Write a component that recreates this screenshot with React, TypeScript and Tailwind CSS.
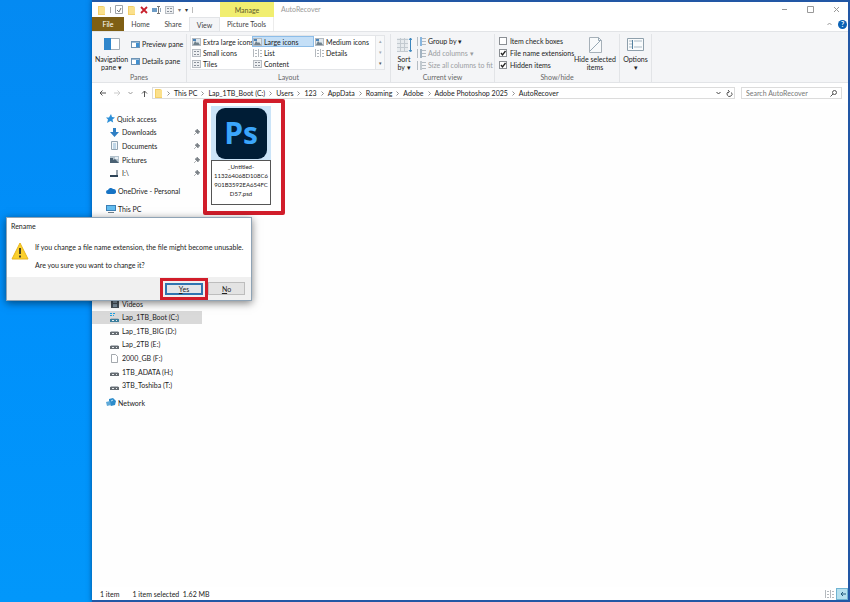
import React from "react";

const font = "font-[Lato,'Open_Sans',sans-serif]";

function FolderIcon({ className = "" }: { className?: string }) {
  return (
    <svg viewBox="0 0 9 10" className={`h-[10px] w-[9px] shrink-0 ${className}`}>
      <path d="M1 1h5l2 1v8H1z" fill="#f3cf68" />
      <path d="M2 2h6v7H2z" fill="#fbe08c" />
    </svg>
  );
}

function GridIcon({ tone = "#8a9099" }: { tone?: string }) {
  return (
    <svg viewBox="0 0 9 8" className="h-[8px] w-[9px] shrink-0">
      <rect x="0.5" y="0.5" width="8" height="7" fill="#eef0f2" stroke="#b9bec4" />
      <path d="M2 2.5h2M5 2.5h2M2 5.5h2M5 5.5h2" stroke={tone} />
    </svg>
  );
}

function ListIcon() {
  return (
    <svg viewBox="0 0 9 8" className="h-[8px] w-[9px] shrink-0">
      <path d="M0.500 0v8M5.500 0v8" stroke="#b4b9be" />
      <path d="M2 1.500h2M2 4.500h2M2 7.500h2M7 1.500h2M7 4.500h2M7 7.500h2" stroke="#b4b9be" />
    </svg>
  );
}

function PictureIcon() {
  return (
    <svg viewBox="0 0 9 8" className="h-[8px] w-[9px] shrink-0">
      <rect x="0.5" y="0.5" width="8" height="7" fill="#dfe8ee" stroke="#b4bac0" />
      <path d="M1 7l2-4 2 2 1-1 2 3z" fill="#70818c" />
      <path d="M1 1h3v2H1z" fill="#4c84b8" />
    </svg>
  );
}

function PaneIcon() {
  return (
    <svg viewBox="0 0 9 7" className="h-[7px] w-[9px] shrink-0">
      <rect x="0.5" y="0.5" width="8" height="6" fill="#fff" stroke="#6d93b5" />
      <path d="M5 1h3v5H5z" fill="#3f8fd0" />
      <path d="M1 1h7v1H1z" fill="#9dbcd6" />
    </svg>
  );
}

function ColumnsIcon({ fill }: { fill: string }) {
  return (
    <svg viewBox="0 0 9 9" className="h-[9px] w-[9px] shrink-0">
      <path d="M0.5 0v9M3 1.5h6M3 4.5h6M3 7.5h6" stroke="#b4bcc3" />
      <path d="M3 0h2v9H3z" fill={fill} />
    </svg>
  );
}

function DriveIcon({ system = false }: { system?: boolean }) {
  return (
    <svg viewBox="0 0 9 9" className="h-[9px] w-[9px] shrink-0">
      {system && <path d="M0 0h2v1H0zM3 0h2v1H3zM0 2h2v1H0zM3 2h1v1H3z" fill="#1c9fe0" />}
      <path d="M1 5h7l1 2H0z" fill="#b5babf" />
      <path d="M0 6h9v3H0z" fill={system ? "#3b7f9e" : "#666c72"} />
      <path d="M2 7.5h2M6 7.5h1" stroke="#e9ecef" />
    </svg>
  );
}

function Pin() {
  return (
    <svg viewBox="0 0 6 6" className="mr-[2px] ml-auto h-[6px] w-[6px] shrink-0">
      <path d="M3 0l3 3-1 0-1 2-3-3 2-1zM2.500 3.500L0 6" fill="#7b8187" stroke="#7b8187" strokeWidth="0.600" />
    </svg>
  );
}

const icons: Record<string, React.ReactNode> = {
  star: (
    <svg viewBox="0 0 9 9" className="h-[9px] w-[9px] shrink-0">
      <path d="M5 0l1 3 3 .5-2.500 2 .7 3L4.500 7 1 9l1-3.500L0 3.500h3z" fill="#2c8fd8" />
    </svg>
  ),
  down: (
    <svg viewBox="0 0 9 9" className="h-[9px] w-[9px] shrink-0">
      <path d="M3 0h3v4h3L4.500 9 0 4h3z" fill="#2f7fc4" />
    </svg>
  ),
  doc: (
    <svg viewBox="0 0 9 9" className="h-[9px] w-[9px] shrink-0">
      <path d="M1.500.5h6v8h-6z" fill="#f4f7f9" stroke="#93a4b1" />
      <path d="M3 3h3M3 5h3M3 7h3" stroke="#5e9ac4" strokeWidth="0.700" />
    </svg>
  ),
  picture: (
    <svg viewBox="0 0 9 9" className="h-[9px] w-[9px] shrink-0">
      <path d="M0 1h9v7H0z" fill="#b4c3cd" />
      <path d="M0 8V3h3v2l2-1 4 4z" fill="#4a6173" />
      <path d="M5 2h3v2H5z" fill="#e6eef4" />
    </svg>
  ),
  usb: (
    <svg viewBox="0 0 9 9" className="h-[9px] w-[9px] shrink-0">
      <path d="M6 1h2v7H6z" fill="#9aa5ae" />
      <path d="M0 6h8v2H0z" fill="#2f4558" />
    </svg>
  ),
  cloud: (
    <svg viewBox="0 0 10 8" className="h-[8px] w-[10px] shrink-0">
      <path d="M2 7a2 2 0 010-4 3 3 0 015-1 2.500 2.500 0 011 5z" fill="#1673c4" />
    </svg>
  ),
  pc: (
    <svg viewBox="0 0 10 9" className="h-[9px] w-[10px] shrink-0">
      <path d="M0 1h10v6H0z" fill="#3a7fb5" />
      <path d="M1 2h8v4H1z" fill="#63bdf0" />
      <path d="M2 8h6v1H2z" fill="#71808b" />
    </svg>
  ),
  video: (
    <svg viewBox="0 0 9 9" className="h-[9px] w-[9px] shrink-0">
      <path d="M1 1h8v8H1z" fill="#48515a" />
      <path d="M3 2h4v2H3zM3 5h4v3H3z" fill="#8194a3" />
    </svg>
  ),
  file: (
    <svg viewBox="0 0 9 9" className="h-[9px] w-[9px] shrink-0">
      <path d="M1.500.5h4l2 2v6h-6z" fill="#fff" stroke="#8d9399" strokeWidth="0.800" />
    </svg>
  ),
  network: (
    <svg viewBox="0 0 10 9" className="h-[9px] w-[10px] shrink-0">
      <path d="M3 1l4-1 3 3-1 4-4 1-2-3z" fill="#2d8ccb" />
      <path d="M0 4l4-1 1 4-4 1z" fill="#5fa9d8" />
      <path d="M5 3l2-1" stroke="#bfe3f7" />
    </svg>
  ),
  system: <DriveIcon system />,
  drive: <DriveIcon />,
};

function TreeItem({ icon, label, child = false, pinned = false, selected = false }: {
  icon: string;
  label: string;
  child?: boolean;
  pinned?: boolean;
  selected?: boolean;
}) {
  return (
    <li className={`flex items-stretch ${selected ? "bg-[#d9d9d9]" : ""}`}>
      <a href="#" className={`flex min-h-[13px] w-full items-center whitespace-nowrap ${child ? "gap-[3px] pl-[18px]" : "gap-[2px] pl-[14px]"}`}>
        {icons[icon]}
        <span>{label}</span>
        {pinned && <Pin />}
      </a>
    </li>
  );
}

function Group({ label, children, className = "" }: { label: string; children: React.ReactNode; className?: string }) {
  return (
    <section className={`mt-[2px] flex shrink-0 flex-col border-r border-[#e2e4e7] ${className}`}>
      <div className="flex h-[38px]">{children}</div>
      <h2 className="h-[10px] text-center leading-[10px] text-[#666]">{label}</h2>
    </section>
  );
}

const layouts = [
  ["Extra large icons", "Large icons", "Medium icons"],
  ["Small icons", "List", "Details"],
  ["Tiles", "Content"],
];

function Check({ label, on = false }: { label: string; on?: boolean }) {
  return (
    <label className="flex h-[12px] items-center gap-[3px] whitespace-nowrap">
      <span className="grid h-[8px] w-[8px] shrink-0">
        <input type="checkbox" defaultChecked={on} className="peer col-start-1 row-start-1 h-[8px] w-[8px] appearance-none border border-[#8b8f94] bg-white" />
        <svg viewBox="0 0 8 8" className="pointer-events-none col-start-1 row-start-1 hidden h-[8px] w-[8px] peer-checked:block">
          <path d="M2 4l1.500 2L6.500 2" fill="none" stroke="#222" strokeWidth="1.300" />
        </svg>
      </span>
      {label}
    </label>
  );
}

function Ribbon() {
  return (
    <div className="flex h-[52px] shrink-0 overflow-hidden border-y border-[#e2e4e7] bg-[#f4f5f7]">
      <Group label="Panes" className="w-[95px]">
        <button className="flex w-[39px] flex-col items-center pt-[4px] leading-[8px]">
          <svg viewBox="0 0 16 12" className="mb-[5px] h-[12px] w-[16px]">
            <path d="M.5.5h15v11H.5z" fill="#fff" stroke="#a3adb6" />
            <path d="M0 0h7v12H0z" fill="#2f86cc" />
          </svg>
          Navigation
          <span>pane ▾</span>
        </button>
        <div className="flex flex-col gap-[5px] pt-[4px]">
          {["Preview pane", "Details pane"].map((t) => (
            <button key={t} className="flex h-[12px] items-center gap-[2px] whitespace-nowrap">
              <PaneIcon />
              {t}
            </button>
          ))}
        </div>
      </Group>
      <Group label="Layout" className="w-[204px]">
        <div className="mt-[1px] ml-[3px] flex h-[35px] w-[195px] border border-[#e3e5e8] bg-white">
          <div className="grid flex-1 grid-cols-[61px_62px_60px] grid-rows-[11px_11px_11px]">
            {layouts.map((row, r) =>
              row.map((t) => (
                <button key={t} className={`flex items-center gap-[2px] border whitespace-nowrap ${t === "Large icons" ? "border-[#8dbde8] bg-[#c4dff7]" : "border-transparent"}`}>
                  {r === 0 ? <PictureIcon /> : t === "Small icons" || t === "Tiles" || t === "Content" ? <GridIcon /> : <ListIcon />}
                  {t}
                </button>
              ))
            )}
          </div>
          <div className="flex w-[9px] flex-col items-center justify-between border-l border-[#e3e5e8] bg-[#f7f8f9] py-[2px] text-[5px] leading-[7px] text-[#a5a9ae]">
            <span>▴</span>
            <span>▾</span>
            <span className="text-[#555]">▾</span>
          </div>
        </div>
      </Group>
      <Group label="Current view" className="w-[104px]">
        <button className="flex w-[26px] flex-col items-center pt-[3px] leading-[8px]">
          <svg viewBox="0 0 16 16" className="mb-[2px] h-[16px] w-[16px]">
            <path d="M1 1h11v14H1z" fill="#e7ebee" />
            <path d="M1 2.500h11M1 6.500h11M1 10.500h11M1 14.500h11M4.500 1v14M8.500 1v14" stroke="#c3cad0" />
            <path d="M14.500 1v13M13 3l1.500-2L16 3M13 13l1.500 2 1.500-2" stroke="#3c86bd" fill="none" />
          </svg>
          Sort
          <span>by ▾</span>
        </button>
        <div className="flex flex-col pt-[1px] whitespace-nowrap">
          <button className="flex h-[12px] items-center gap-[2px]"><ColumnsIcon fill="#88b6df" />Group by ▾</button>
          <button className="flex h-[12px] items-center gap-[2px] text-[#9a9da1]"><ColumnsIcon fill="#a3b4c2" />Add columns ▾</button>
          <button className="flex h-[12px] items-center gap-[2px] text-[#9a9da1]"><ColumnsIcon fill="#c1c9cf" />Size all columns to fit</button>
        </div>
      </Group>
      <Group label="Show/hide" className="w-[125px]">
        <div className="flex w-[76px] flex-col pt-[1px] pl-[4px]">
          <Check label="Item check boxes" />
          <Check label="File name extensions" on />
          <Check label="Hidden items" on />
        </div>
        <button className="flex w-[48px] flex-col items-center pt-[3px] leading-[8px] whitespace-nowrap">
          <svg viewBox="0 0 13 16" className="mb-[2px] h-[16px] w-[13px]">
            <path d="M.5.5h9l3 3v12H.5z" fill="#f8fafb" stroke="#a6b0b8" />
            <path d="M1 14L12 3M9.500.5v3h3" stroke="#97a9b5" fill="none" />
          </svg>
          Hide selected
          <span>items</span>
        </button>
      </Group>
      <section className="mt-[2px] flex w-[32px] shrink-0 border-r border-[#e2e4e7]">
        <button className="flex w-full flex-col items-center justify-start pt-[4px] leading-[8px]">
          <svg viewBox="0 0 17 13" className="mb-[4px] h-[13px] w-[17px]">
            <path d="M.5.5h16v12H.5z" fill="#f9fbfc" stroke="#8fa0ac" />
            <path d="M2 3h3M2 6h3M2 9h3M7 3h8M7 9h8" stroke="#a9b9c5" />
            <path d="M5.500 2v9" stroke="#54809f" />
          </svg>
          Options
          <span>▾</span>
        </button>
      </section>
    </div>
  );
}

const crumbs = ["This PC", "Lap_1TB_Boot (C:)", "Users", "123", "AppData", "Roaming", "Adobe", "Adobe Photoshop 2025", "AutoRecover"];

function TitleBar() {
  return (
    <header className="flex h-[29px] shrink-0 items-stretch bg-white">
      <div className="flex w-[128px] shrink-0 flex-col">
        <div className="flex h-[15px] items-center gap-[4px] pl-[5px] text-[#777]">
          <FolderIcon />
          <span className="h-[6px] w-px bg-[#aaa]" />
          <svg viewBox="0 0 8 9" className="h-[9px] w-[8px]"><path d="M.5.5h7v8h-7z" fill="#fff" stroke="#a0a5aa" /><path d="M2 5l2 2 2-4" fill="none" stroke="#777" /></svg>
          <FolderIcon />
          <svg viewBox="0 0 8 8" className="h-[8px] w-[8px]"><path d="M1 1l6 6M7 1L1 7" stroke="#c8202c" strokeWidth="1.800" /></svg>
          <svg viewBox="0 0 9 8" className="h-[8px] w-[9px]"><path d="M0 2h5v4H0z" fill="#6d9cc6" /><path d="M6.500 0v8M5 .5h3M5 7.500h3" stroke="#777" /><path d="M8 2h1v4H8z" fill="#9ab" /></svg>
          <GridIcon />
          <span className="text-[6px]">▾</span>
          <span className="text-[6px] text-[#333]">▾</span>
          <span className="h-[6px] w-px bg-[#bbb]" />
        </div>
        <nav className="flex h-[14px] items-stretch text-[#444]">
          <button className="w-[32px] bg-[#7f5f14] text-white">File</button>
          <button className="w-[33px]">Home</button>
          <button className="w-[32px]">Share</button>
          <button className="w-[31px] border-x border-t border-[#e2e4e7] bg-[#f4f5f7]">View</button>
        </nav>
      </div>
      <div className="flex w-[54px] shrink-0 flex-col items-stretch text-center">
        <span className="h-[15px] bg-[#f1ee70] pt-[1px] leading-[14px] text-[#5c5a2c]">Manage</span>
        <button className="h-[14px] border-r border-[#ececec] whitespace-nowrap text-[#444]">Picture Tools</button>
      </div>
      <h1 className="h-[15px] flex-1 pl-[7px] leading-[15px] text-[#999]">AutoRecover</h1>
      <div className="flex shrink-0 flex-col">
        <div className="flex h-[15px] items-center gap-[19px] pr-[8px]">
          <button aria-label="Minimize"><svg viewBox="0 0 7 7" className="h-[7px] w-[7px]"><path d="M1 3.500h5" stroke="#999" /></svg></button>
          <button aria-label="Maximize"><svg viewBox="0 0 7 7" className="h-[7px] w-[7px]"><path d="M.5.5h6v6h-6z" fill="none" stroke="#999" /></svg></button>
          <button aria-label="Close"><svg viewBox="0 0 7 7" className="h-[7px] w-[7px]"><path d="M1 1l5 5M6 1L1 6" stroke="#999" /></svg></button>
        </div>
        <div className="flex h-[14px] items-center justify-end gap-[6px] pr-[1px]">
          <button aria-label="Collapse ribbon"><svg viewBox="0 0 5 4" className="h-[4px] w-[5px]"><path d="M.5 3l2-2 2 2" fill="none" stroke="#999" /></svg></button>
          <button className="h-[9px] w-[9px] rounded-full bg-[#0b62b5] leading-[9px] font-bold text-white">?</button>
        </div>
      </div>
    </header>
  );
}

function AddressRow() {
  return (
    <div className="flex h-[20px] shrink-0 items-center bg-white pr-[6px]">
      <div className="flex w-[60px] shrink-0 items-center justify-between pr-[4px] pl-[7px]">
        <button aria-label="Back"><svg viewBox="0 0 7 6" className="h-[6px] w-[7px]"><path d="M7 3H1M3.500.5L1 3l2.500 2.500" fill="none" stroke="#555" /></svg></button>
        <button aria-label="Forward"><svg viewBox="0 0 7 6" className="h-[6px] w-[7px]"><path d="M0 3h6M3.500.5L6 3 3.500 5.500" fill="none" stroke="#ccc" /></svg></button>
        <button aria-label="Recent locations"><svg viewBox="0 0 5 4" className="h-[4px] w-[5px]"><path d="M.5 1l2 2 2-2" fill="none" stroke="#999" /></svg></button>
        <button aria-label="Up"><svg viewBox="0 0 7 7" className="h-[7px] w-[7px]"><path d="M3.500 7V1M1 3.500L3.500 1 6 3.500" fill="none" stroke="#555" /></svg></button>
      </div>
      <div className="flex h-[12px] min-w-0 flex-1 items-center border border-[#dcdcdc] pr-[1px] pl-[1px]">
        <FolderIcon />
        {crumbs.map((c) => (
          <React.Fragment key={c}>
            <svg viewBox="0 0 3 5" className="mx-[4px] h-[5px] w-[3px] shrink-0"><path d="M.5.5l2 2-2 2" fill="none" stroke="#777" strokeWidth="0.800" /></svg>
            <a href="#" className="whitespace-nowrap">{c}</a>
          </React.Fragment>
        ))}
        <div className="ml-auto flex items-center gap-[5px]">
          <button aria-label="Previous locations"><svg viewBox="0 0 5 4" className="h-[4px] w-[5px]"><path d="M.5 1l2 2 2-2" fill="none" stroke="#444" /></svg></button>
          <button aria-label="Refresh"><svg viewBox="0 0 7 7" className="h-[7px] w-[7px]"><path d="M5.500 2.500a2.500 2.500 0 11-3-.8M2 0l1.500 1.700L2 3" fill="none" stroke="#444" strokeWidth="0.900" /></svg></button>
        </div>
      </div>
      <label className="ml-[6px] flex h-[12px] w-[101px] shrink-0 items-center border border-[#dcdcdc] pr-[4px] pl-[4px]">
        <input type="text" aria-label="Search AutoRecover" placeholder="Search AutoRecover" className="min-w-0 flex-1 bg-transparent outline-none placeholder:text-[#777]" />
        <svg viewBox="0 0 7 7" className="h-[7px] w-[7px]"><circle cx="4.500" cy="2.500" r="2" fill="none" stroke="#555" /><path d="M3 4L.5 6.500" stroke="#555" /></svg>
      </label>
    </div>
  );
}

function Sidebar() {
  return (
    <nav className="w-[110px] shrink-0 pt-[9px]">
      <ul className="grid h-[68px] auto-rows-fr">
        <TreeItem icon="star" label="Quick access" />
        <TreeItem icon="down" label="Downloads" child pinned />
        <TreeItem icon="doc" label="Documents" child pinned />
        <TreeItem icon="picture" label="Pictures" child pinned />
        <TreeItem icon="usb" label="I:\" child pinned />
      </ul>
      <ul className="mt-[4px] flex flex-col gap-[5px]">
        <TreeItem icon="cloud" label="OneDrive - Personal" />
        <TreeItem icon="pc" label="This PC" />
      </ul>
      <ul className="mt-[82px] grid h-[95px] auto-rows-fr">
        <TreeItem icon="video" label="Videos" child />
        <TreeItem icon="system" label="Lap_1TB_Boot (C:)" child selected />
        <TreeItem icon="drive" label="Lap_1TB_BIG (D:)" child />
        <TreeItem icon="drive" label="Lap_2TB (E:)" child />
        <TreeItem icon="file" label="2000_GB (F:)" child />
        <TreeItem icon="drive" label="1TB_ADATA (H:)" child />
        <TreeItem icon="drive" label="3TB_Toshiba (T:)" child />
      </ul>
      <ul className="mt-[4px]">
        <TreeItem icon="network" label="Network" />
      </ul>
    </nav>
  );
}

function RenameDialog() {
  return (
    <section role="dialog" aria-label="Rename" className="absolute top-[217px] left-[6px] flex w-[246px] flex-col border border-[#8fa3b5] bg-white shadow-[0_2px_8px_rgba(0,0,0,0.5)]">
      <h2 className="h-[18px] pl-[4px] leading-[17px]">Rename</h2>
      <div className="flex h-[41px] gap-[6px] pt-[6px] pl-[4px]">
        <svg viewBox="0 0 18 18" className="h-[18px] w-[18px] shrink-0">
          <path d="M9 1l8 16H1z" fill="#fbd02c" stroke="#e8b51c" strokeLinejoin="round" />
          <path d="M9 6v6M9 13.500v2" stroke="#222" strokeWidth="1.600" />
        </svg>
        <div className="flex flex-col gap-[8px] leading-[10px] whitespace-nowrap">
          <p>If you change a file name extension, the file might become unusable.</p>
          <p>Are you sure you want to change it?</p>
        </div>
      </div>
      <div className="flex h-[23px] items-center justify-end bg-[#f0f0f0] pr-[6px]">
        <div className="flex h-[22px] w-[48px] items-stretch border-[3px] border-[#d11d2a] p-[2px]">
          <button className="flex-1 border-2 border-[#2f74b0] bg-[#e3e6e9] leading-[8px]"><u>Y</u>es</button>
        </div>
        <button className="h-[13px] w-[37px] border border-[#bdbdbd] bg-[#e3e3e3] leading-[10px]"><u>N</u>o</button>
      </div>
    </section>
  );
}

export default function App() {
  return (
    <main className={`relative flex min-h-screen bg-linear-to-b from-[#048af2] via-[#0090fb] to-[#0297fa] pl-[92px] text-[7px] leading-[10px] text-[#222] ${font}`}>
      <div className="flex min-w-0 flex-1 flex-col border-y-2 border-r-2 border-[#2257a5] bg-white shadow-[0_0_5px_rgba(0,30,80,0.6)]">
        <TitleBar />
        <Ribbon />
        <AddressRow />
        <div className="flex flex-1 bg-[#fefefe]">
          <Sidebar />
          <div className="flex-1 pl-[1px]">
            <figure className="-mt-[4px] flex h-[116px] w-[82px] flex-col items-start rounded-[2px] border-4 border-[#d11d2a] pt-[3px] pl-[4px]">
              <div className="flex h-[54px] w-[60px] items-center justify-center bg-[#cbe4f8]">
                <div className="h-[51px] w-[51px] rounded-[9px] bg-[#001d36] text-center font-['Open_Sans',sans-serif] text-[30px] leading-[49px] font-bold text-[#3ba6fb]">Ps</div>
              </div>
              <textarea
                aria-label="File name"
                spellCheck={false}
                defaultValue={"_Untitled-\n113264068D108C6\n901B3592EA654FC\nD57.psd"}
                className="h-[45px] w-[60px] resize-none overflow-hidden border border-[#555] bg-white pt-px text-center text-[6px] leading-[9px] whitespace-pre outline-none"
              />
            </figure>
          </div>
        </div>
        <footer className="flex h-[13px] shrink-0 items-center gap-[13px] bg-white pl-[8px]">
          <span>1 item</span>
          <span>1 item selected&nbsp; 1.62 MB</span>
          <div className="ml-auto flex items-center gap-[2px]">
            <button aria-label="Details view"><ListIcon /></button>
            <button aria-label="Large icons view" className="flex h-[12px] w-[12px] items-center justify-center border border-[#6fb3d2] bg-[#b5e0ee]">
              <svg viewBox="0 0 7 6" className="h-[6px] w-[7px]"><path d="M7 3H2M4 1L2 3l2 2" stroke="#235b7c" fill="none" /></svg>
            </button>
          </div>
        </footer>
      </div>
      <RenameDialog />
    </main>
  );
}
